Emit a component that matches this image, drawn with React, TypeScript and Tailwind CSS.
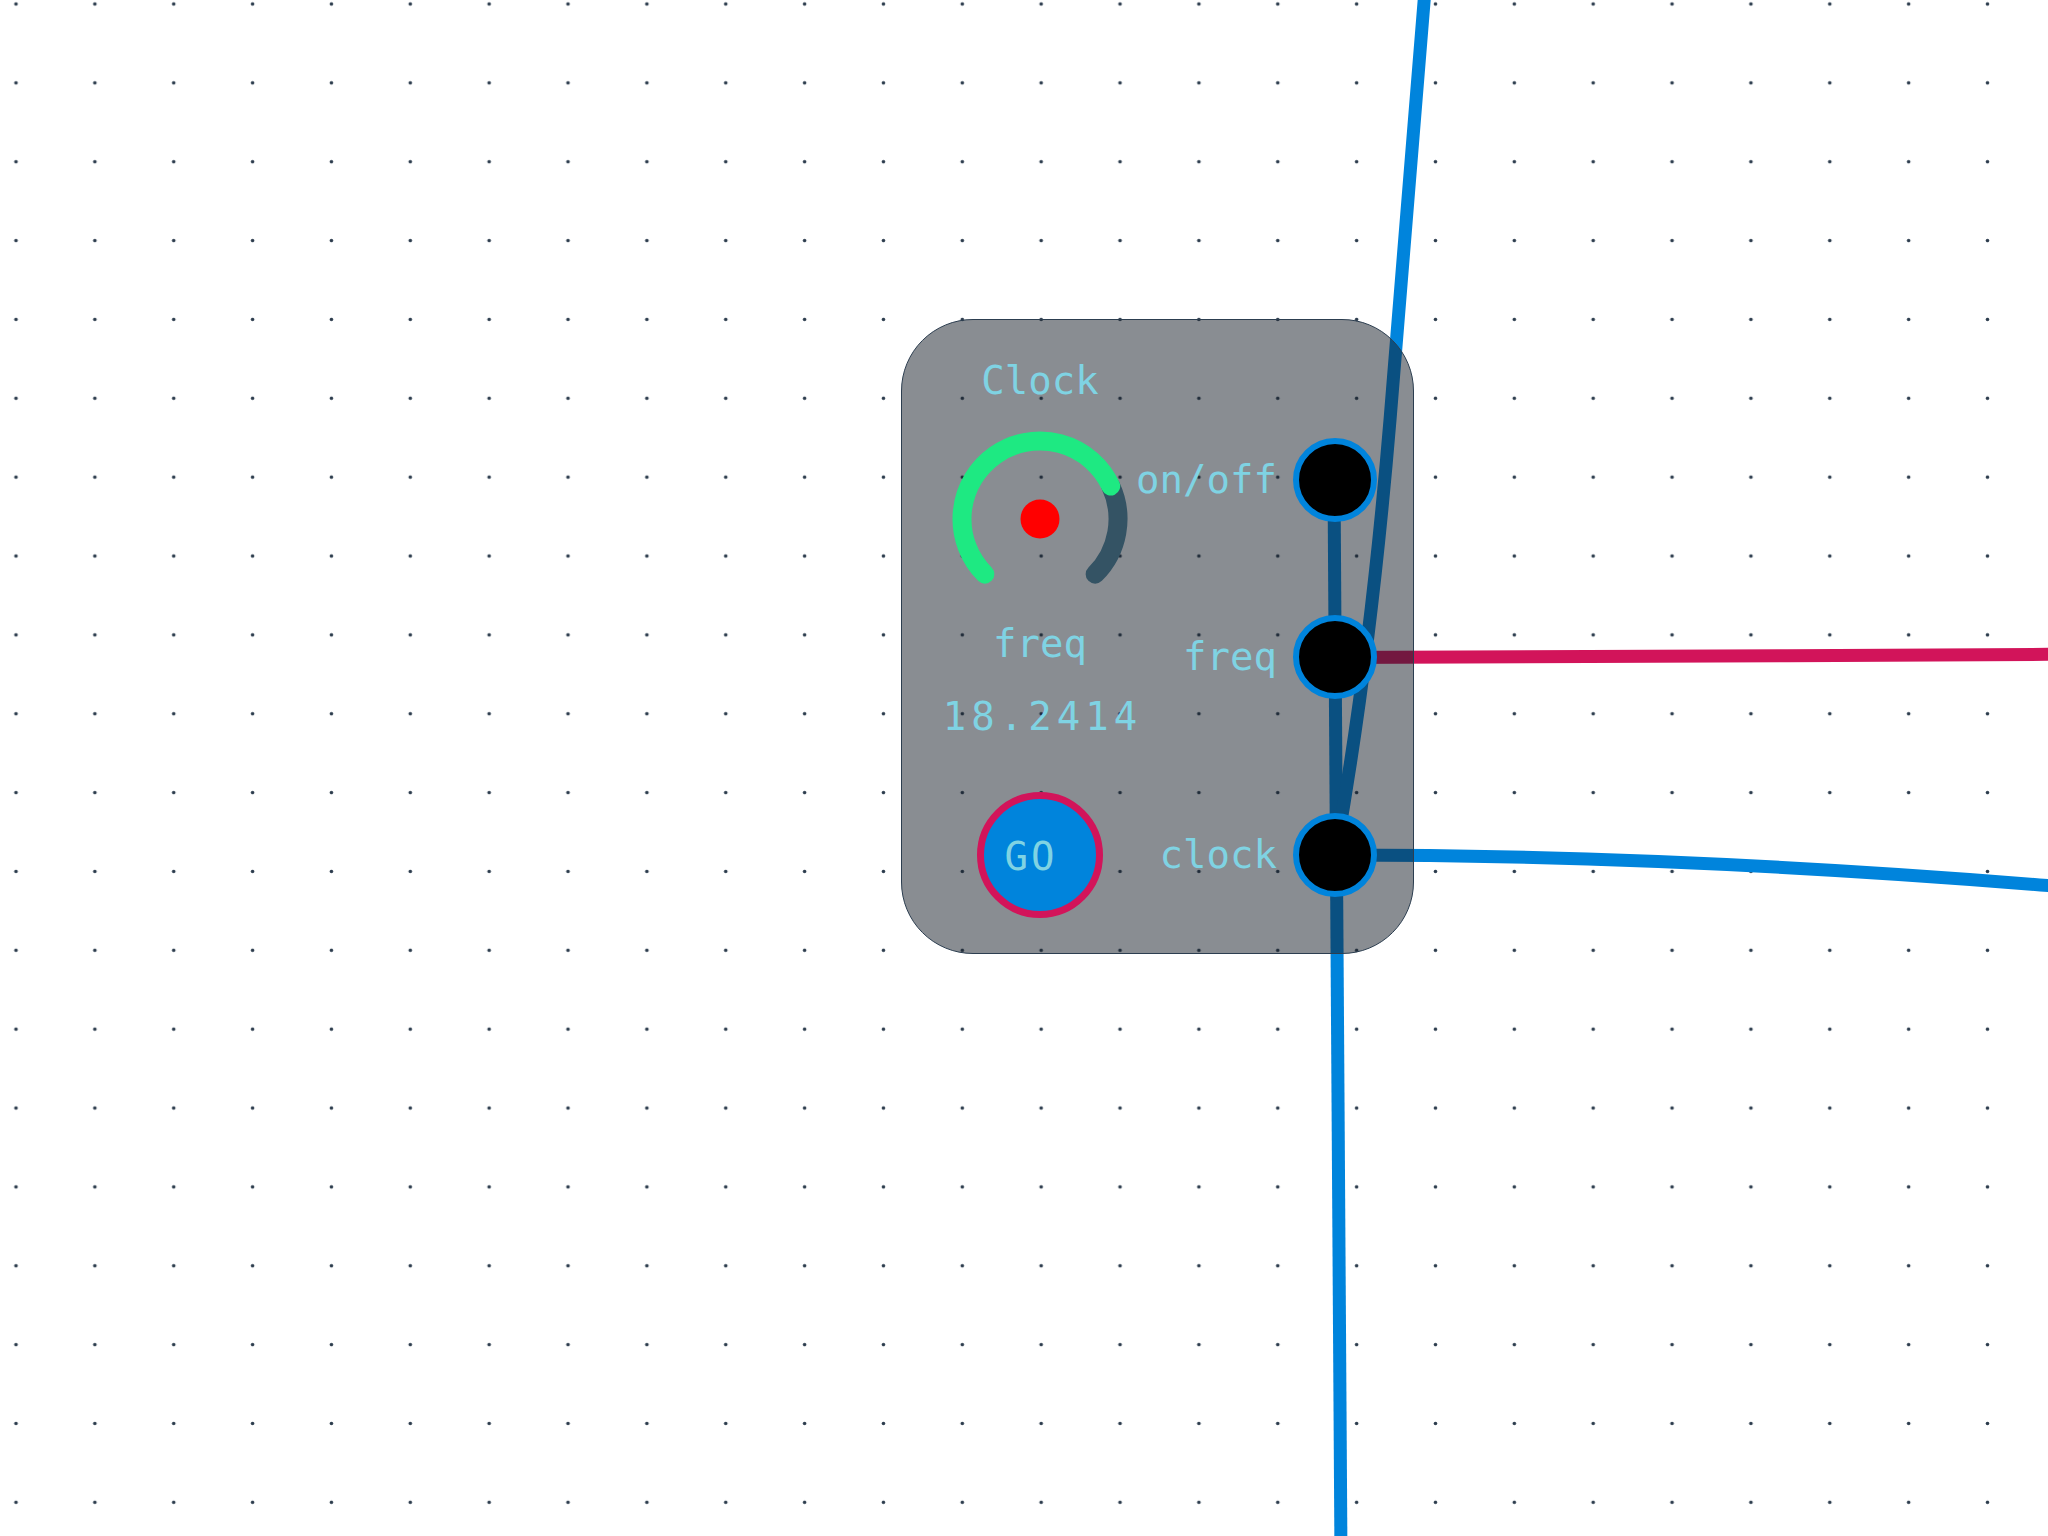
import React from "react"

const GRID = 78.86

function Knob({ value }: { value: number }) {
    // arc runs from 135deg to 405deg (clockwise, screen coords)
    const r = 78
    const c = 90
    const start = 135
    const end = start + 270 * value
    const pt = (deg: number) => {
        const a = (deg * Math.PI) / 180
        return `${c + r * Math.cos(a)} ${c + r * Math.sin(a)}`
    }
    const large = end - start > 180 ? 1 : 0
    return (
        <svg width="180" height="180" viewBox="0 0 180 180" className="block">
            <path d={`M ${pt(end)} A ${r} ${r} 0 0 1 ${pt(405)}`} fill="none" stroke="#345364" strokeWidth="19" strokeLinecap="round" />
            <path d={`M ${pt(start)} A ${r} ${r} 0 ${large} 1 ${pt(end)}`} fill="none" stroke="#1ee982" strokeWidth="19" strokeLinecap="round" />
            <circle cx={c} cy={c} r="19.5" fill="#ff0000" />
        </svg>
    )
}

function Port({ label }: { label: string }) {
    return (
        <div className="flex items-center gap-[16px] h-[84px] shrink-0">
            <span className="leading-[40px] whitespace-nowrap">{label}</span>
            <div className="w-[84px] h-[84px] shrink-0 rounded-full bg-black border-[6px] border-[#0084dc]" />
        </div>
    )
}

export default function App() {
    return (
        <div className="relative w-[2048px] h-[1536px] overflow-hidden bg-white font-['DejaVu_Sans_Mono',monospace]">
            <svg className="absolute inset-0" width="2048" height="1536">
                <defs>
                    <pattern id="dots" width={GRID} height={GRID} patternUnits="userSpaceOnUse" x={16 - GRID / 2} y={4 - GRID / 2}>
                        <circle cx={GRID / 2} cy={GRID / 2} r="1.8" fill="#2b3b4c" />
                    </pattern>
                </defs>
                <rect width="2048" height="1536" fill="url(#dots)" />
                {/* edges */}
                <path d="M 1334 480 Q 1337 1000 1341 1560" fill="none" stroke="#0084dc" strokeWidth="13" />
                <path d="M 1425 -10 L 1390 420 Q 1370 660 1336 850" fill="none" stroke="#0084dc" strokeWidth="13" />
                <path d="M 1334 657.5 C 1700 657.5 1800 655 2100 654" fill="none" stroke="#d2145a" strokeWidth="13" />
                <path d="M 1334 855 Q 1700 855 2100 890" fill="none" stroke="#0084dc" strokeWidth="13" />
            </svg>

            {/* node */}
            <div className="absolute left-[901px] top-[319px] w-[513px] h-[635px] rounded-[72px] border-[1.5px] border-[#2c3e50] bg-[#141c26]/50 flex text-[39px] text-[#7fd3e3]">
                <div className="w-[276px] shrink-0 flex flex-col items-center pt-[41px]">
                    <div className="leading-[40px]">Clock</div>
                    <div className="mt-[28px]">
                        <Knob value={200 / 270} />
                    </div>
                    <div className="mt-[15px] leading-[40px]">freq</div>
                    <div className="mt-[33px] leading-[40px] tracking-[5px] pl-[5px]">18.2414</div>
                    <button className="mt-[55px] w-[126px] h-[126px] rounded-full bg-[#0084dc] border-[7px] border-[#d2145a] flex items-center justify-center pr-[18px] pt-[3px] tracking-[3px] text-[#7fd3e3] leading-[40px]">
                        GO
                    </button>
                </div>
                <div className="flex-1 min-w-0 flex flex-col items-end pt-[118px] pr-[36px]">
                    <Port label="on/off" />
                    <div className="mt-[93px]">
                        <Port label="freq" />
                    </div>
                    <div className="mt-[114px]">
                        <Port label="clock" />
                    </div>
                </div>
            </div>
        </div>
    )
}
